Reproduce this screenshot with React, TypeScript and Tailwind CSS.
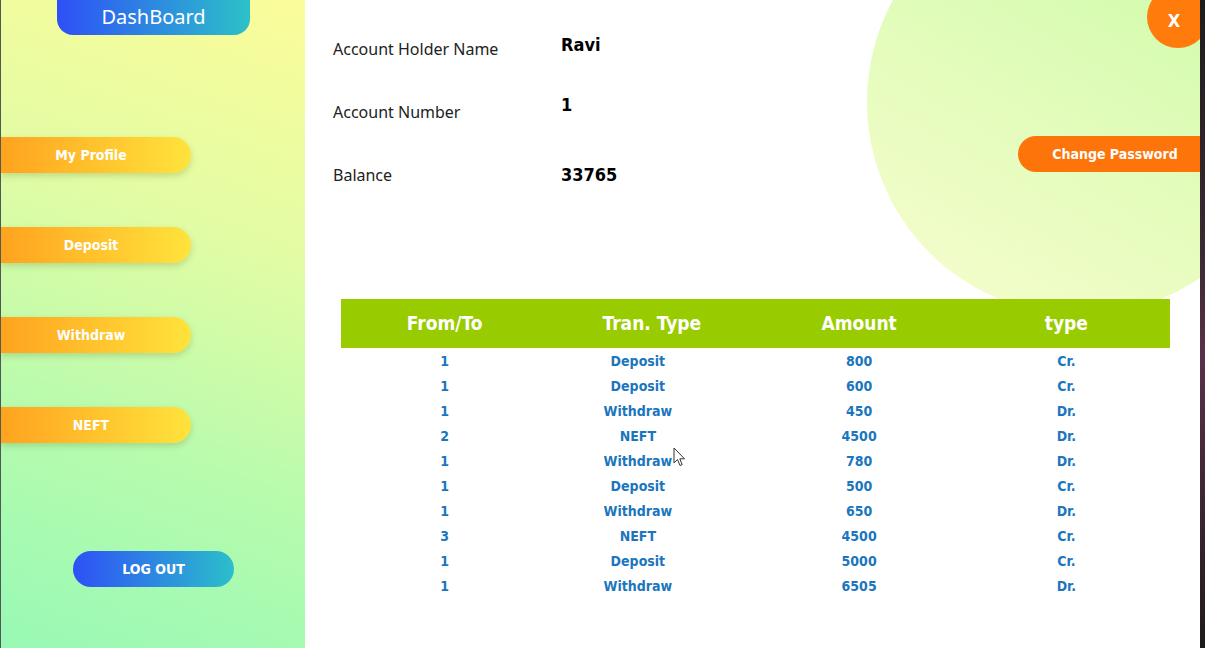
import React from 'react';

const rows: string[][] = [
    ["1", "Deposit", "800", "Cr."],
    ["1", "Deposit", "600", "Cr."],
    ["1", "Withdraw", "450", "Dr."],
    ["2", "NEFT", "4500", "Dr."],
    ["1", "Withdraw", "780", "Dr."],
    ["1", "Deposit", "500", "Cr."],
    ["1", "Withdraw", "650", "Dr."],
    ["3", "NEFT", "4500", "Cr."],
    ["1", "Deposit", "5000", "Cr."],
    ["1", "Withdraw", "6505", "Dr."],
]

const menu: string[] = ["My Profile", "Deposit", "Withdraw", "NEFT"]

const tahoma = "font-['DejaVu_Sans_Condensed','DejaVu_Sans',sans-serif]"
const segoe = "font-['Noto_Sans','Open_Sans',sans-serif]"

const App = () => {
    return (
        <div className="w-[1205px] h-[648px] flex overflow-hidden bg-white">
            {/* sidebar */}
            <div className="w-[305px] h-full flex flex-col border-l border-[#4d5a55] bg-[linear-gradient(200deg,#fbfc9a_0%,#e2fca4_35%,#b4fbae_70%,#98f9b5_100%)]">
                <div className={`ml-[56px] w-[193px] h-[35px] rounded-b-[16px] bg-[linear-gradient(90deg,#2e50f7,#2cc2c8)] flex items-center justify-center pb-[2px] text-white text-[20px] ${segoe}`}>
                    DashBoard
                </div>
                <div className="mt-[102px] flex flex-col gap-[54px]">
                    {menu.map((m, i) => (
                        <div key={i} className={`w-[190px] h-[36px] rounded-r-full bg-[linear-gradient(90deg,#ffa31f,#ffe33c)] shadow-[0_3px_6px_rgba(90,120,40,0.25)] flex items-center justify-center pr-[10px] text-white text-[14px] font-bold ${tahoma}`}>
                            {m}
                        </div>
                    ))}
                </div>
                <div className={`mt-[108px] ml-[72px] w-[161px] h-[36px] rounded-full bg-[linear-gradient(90deg,#2e50f7,#2cbfca)] flex items-center justify-center text-white text-[14px] font-bold ${tahoma}`}>
                    LOG OUT
                </div>
            </div>

            {/* main */}
            <div className="relative flex-1 h-full overflow-hidden bg-white">
                <div className="absolute left-[562px] top-[-111px] w-[426px] h-[426px] rounded-full bg-[linear-gradient(30deg,#f8fdcf_0%,#e3fcbb_45%,#c5fba3_100%)]" />
                <div className="absolute left-[842px] top-[-14px] w-[62px] h-[62px] rounded-full bg-[#fe7b0c] flex items-center justify-center pr-[8px] pt-[6px]">
                    <span className={`text-white text-[18px] font-bold ${tahoma}`}>X</span>
                </div>

                <div className="relative flex justify-between items-start h-[299px]">
                    <div className={`pl-[28px] pt-[18px] grid grid-cols-[228px_auto] content-start text-[#222] ${segoe}`}>
                        <div className="h-[63px] pt-[19px] text-[16px] leading-[24px]">Account Holder Name</div>
                        <div className={`h-[63px] pt-[15px] text-[18px] leading-[24px] font-bold text-black ${tahoma}`}>Ravi</div>
                        <div className="h-[63px] pt-[19px] text-[16px] leading-[24px]">Account Number</div>
                        <div className={`h-[63px] pt-[12px] text-[18px] leading-[24px] font-bold text-black ${tahoma}`}>1</div>
                        <div className="h-[63px] pt-[19px] text-[16px] leading-[24px]">Balance</div>
                        <div className={`h-[63px] pt-[19px] text-[18px] leading-[24px] font-bold text-black ${tahoma}`}>33765</div>
                    </div>
                    <div className={`mt-[136px] w-[182px] h-[36px] rounded-l-full bg-[#fd740a] flex items-center justify-center pl-[12px] text-white text-[14px] font-bold ${tahoma}`}>
                        Change Password
                    </div>
                </div>

                <table className={`relative ml-[36px] w-[829px] table-fixed border-collapse ${tahoma}`}>
                    <thead>
                        <tr className="bg-[#99cc00] h-[49px] text-white text-[19px] font-bold">
                            <th>From/To</th>
                            <th>Tran. Type</th>
                            <th>Amount</th>
                            <th>type</th>
                        </tr>
                    </thead>
                    <tbody>
                        {rows.map((r, index) => (
                            <tr key={index} className="h-[25px] text-[14px] font-bold text-[#1b76bd] text-center">
                                <td className="pt-[2px]">{r[0]}</td>
                                <td className="pt-[2px] pr-[28px]">{r[1]}</td>
                                <td className="pt-[2px]">{r[2]}</td>
                                <td className="pt-[2px]">{r[3]}</td>
                            </tr>
                        ))}
                    </tbody>
                </table>

                <svg className="absolute left-[368px] top-[447px]" width="13" height="20" viewBox="0 0 13 20">
                    <path d="M1 1 L1 16 L4.5 12.5 L7 18.5 L9.2 17.6 L6.8 11.8 L11.5 11.8 Z" fill="#fff" stroke="#333" strokeWidth="1" strokeLinejoin="round" />
                </svg>
            </div>

            <div className="w-[5px] h-full bg-[linear-gradient(180deg,#1e1b1f,#3b2a33_40%,#5a3148_55%,#1f1a1c)]" />
        </div>
    )
};

export default App;
